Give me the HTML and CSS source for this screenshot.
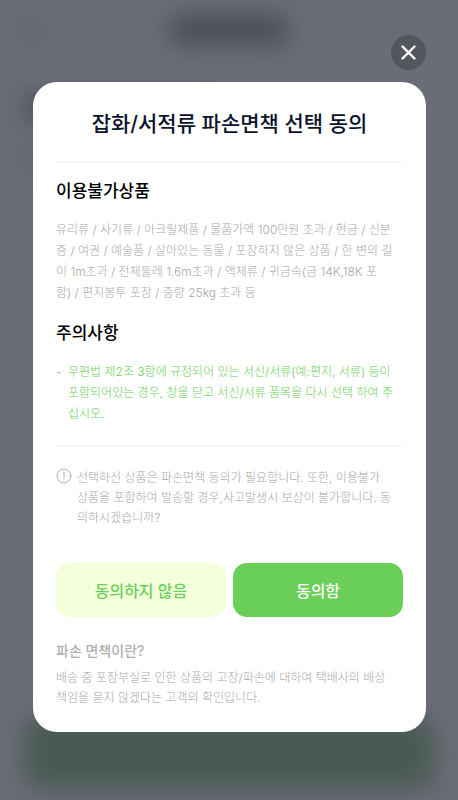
FILE: index.html
```html
<!DOCTYPE html>
<html lang="ko">

<head>
    <meta charset="UTF-8" />
    <meta name="viewport" content="width=device-width, initial-scale=1.0" />
    <title>파손면책 선택 동의</title>
    <link rel="stylesheet" href="styles.css">
</head>

<body>
    <div class="page" aria-hidden="true">
        <div class="page-header">
            <div class="page-back"></div>
            <div class="page-title"></div>
            <div class="page-menu"></div>
        </div>
        <div class="page-text"></div>
        <div class="page-text short"></div>
        <div class="page-button"></div>
    </div>

    <main class="overlay">
        <button class="close" type="button" aria-label="닫기">
            <svg width="35" height="35" viewBox="0 0 35 35" fill="none" stroke="#fff" stroke-width="2.4" stroke-linecap="round">
                <path d="M11.5 11.5 23.5 23.5M23.5 11.5 11.5 23.5" />
            </svg>
        </button>

        <section class="modal" role="dialog" aria-labelledby="modal-title">
            <h1 id="modal-title">잡화/서적류 파손면책 선택 동의</h1>
            <hr>
            <h2>이용불가상품</h2>
            <p class="items">
                유리류 / 사기류 / 아크릴제품 / 물품가액 100만원 초과 / 현금 / 신분<br>증 / 여권 / 예술품 / 살아있는 동물 / 포장하지 않은 상품 / 한 변의 길<br>이 1m초과 / 전체둘레 1.6m초과 / 액체류 / 귀금속(금 14K,18K 포<br>함) / 편지봉투 포장 / 중량 25kg 초과 등
            </p>
            <h2>주의사항</h2>
            <ul class="caution">
                <li>우편법 제2조 3항에 규정되어 있는 서신/서류(예:편지, 서류) 등이<br>포함되어있는 경우, 창을 닫고 서신/서류 품목을 다시 선택 하여 주<br>십시오.</li>
            </ul>
            <hr>
            <div class="notice">
                <svg width="16" height="16" viewBox="0 0 16 16" fill="none" stroke="#b0b0b0" stroke-linecap="round">
                    <circle cx="8" cy="8" r="7" />
                    <path d="M8 4.7V8.6" stroke-width="1.2" />
                    <circle cx="8" cy="11" r=".7" fill="#b0b0b0" stroke="none" />
                </svg>
                <p>선택하신 상품은 파손면책 동의가 필요합니다. 또한, 이용불가<br>상품을 포함하여 발송할 경우,사고발생시 보상이 불가합니다. 동<br>의하시겠습니까?</p>
            </div>
            <div class="buttons">
                <button class="disagree" type="button">동의하지 않음</button>
                <button class="agree" type="button">동의함</button>
            </div>
            <h3>파손 면책이란?</h3>
            <p class="about">배송 중 포장부실로 인한 상품의 고장/파손에 대하여 택배사의 배상<br>책임을 묻지 않겠다는 고객의 확인입니다.</p>
        </section>
    </main>
</body>

</html>
```
FILE: styles.css
```css
:root {
    --green: #69cf58;
    --gray: #a8a8a8;
    --line: #f2f2f2;
}

* {
    box-sizing: border-box;
    margin: 0;
    padding: 0;
}

body {
    min-height: 100vh;
    background: #6a6c76;
    font-family: Inter, "Noto Sans CJK KR", sans-serif;
    font-size: 12px;
    font-weight: 300;
    color: #000;
    overflow-x: hidden;
}

button {
    border: 0;
    font-family: inherit;
    cursor: pointer;
}

/* dimmed page behind the modal */
.page {
    position: fixed;
    inset: 0;
    display: flex;
    flex-direction: column;
    padding: 16px 24px 12px;
    filter: blur(12px);
}

.page-header {
    display: flex;
    justify-content: space-between;
    align-items: center;
    margin-bottom: 52px;
}

.page-back,
.page-menu {
    width: 14px;
    height: 18px;
    background: #5c5e68;
}

.page-menu {
    background: #666871;
}

.page-title {
    width: 116px;
    height: 28px;
    background: #4a4b56;
}

.page-text {
    width: 200px;
    height: 24px;
    margin-bottom: 30px;
    background: #4c4d58;
}

.page-text.short {
    height: 18px;
    background: #5d5f69;
}

.page-button {
    height: 70px;
    margin-top: auto;
    border-radius: 16px;
    background: #485a52;
}

.overlay {
    position: relative;
    display: flex;
    flex-direction: column;
    padding: 35px 32px 35px 33px;
}

.close {
    align-self: flex-end;
    width: 35px;
    height: 35px;
    margin-bottom: 12px;
    border-radius: 50%;
    background: #54565d;
}

.close svg {
    display: block;
}

.modal {
    padding: 24px 23px;
    border-radius: 24px;
    background: #fff;
}

h1 {
    font-size: 21px;
    font-weight: 500;
    line-height: 36px;
    text-align: center;
    color: #0c142b;
}

hr {
    border: 0;
    border-top: 1px solid var(--line);
    margin: 20px 0 16px;
}

h2 {
    font-size: 17px;
    font-weight: 500;
    line-height: 24px;
    margin-bottom: 16px;
}

.items {
    line-height: 21px;
    margin-bottom: 18px;
    color: var(--gray);
}

.caution {
    list-style: none;
    line-height: 21px;
    margin-bottom: 21px;
    color: var(--green);
}

.caution li {
    display: flex;
}

.caution li::before {
    content: "-";
    flex: 0 0 12px;
}

.notice {
    display: flex;
    gap: 5px;
    margin: 22px 0 35px;
    line-height: 20px;
    color: var(--gray);
}

.notice svg {
    flex-shrink: 0;
}

.buttons {
    display: flex;
    gap: 7px;
    margin-bottom: 22px;
}

.buttons button {
    flex: 1;
    height: 54px;
    border-radius: 14px;
    font-size: 16px;
    font-weight: 500;
}

.disagree {
    background: #f4ffdc;
    color: var(--green);
}

.agree {
    background: var(--green);
    color: #fff;
}

h3 {
    font-size: 14px;
    font-weight: 500;
    line-height: 24px;
    margin-bottom: 5px;
    color: #b0b0b0;
}

.about {
    line-height: 20px;
    color: var(--gray);
}
```
